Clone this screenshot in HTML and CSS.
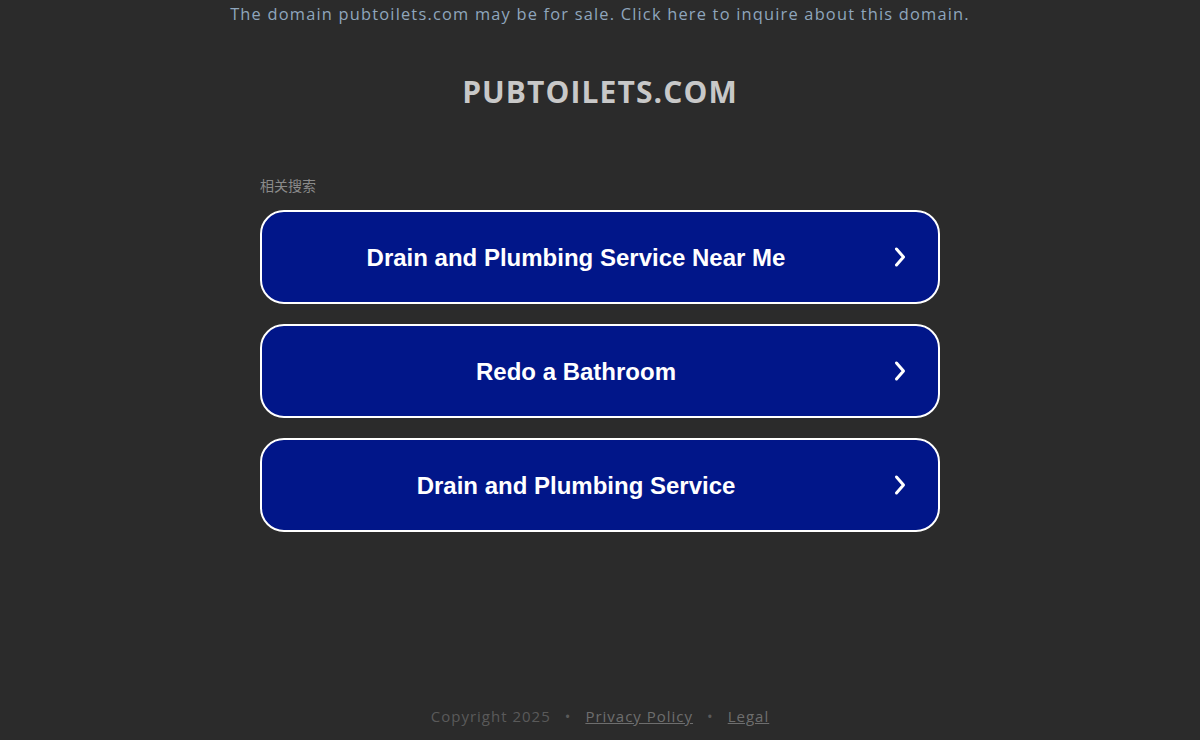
FILE: index.html
```html
<!DOCTYPE html>
<html lang="en">
<head>
<meta charset="utf-8">
<title>pubtoilets.com</title>
<link rel="stylesheet" href="styles.css">
</head>
<body>
<div class="page">
  <div class="sale-bar"><a href="#" class="sale-link">The domain pubtoilets.com may be for sale. Click here to inquire about this domain.</a></div>
  <h1 class="domain">PUBTOILETS.COM</h1>
  <main class="content">
    <div class="related">相关搜索</div>
    <ul class="links">
      <li><a href="#" class="link-btn"><span class="link-text">Drain and Plumbing Service Near Me</span><span class="chev"><svg width="16" height="24" viewBox="0 0 16 24"><path d="M4.5 4 L11.5 12 L4.5 20" fill="none" stroke="#fff" stroke-width="3" stroke-linecap="round" stroke-linejoin="round"/></svg></span></a></li>
      <li><a href="#" class="link-btn"><span class="link-text">Redo a Bathroom</span><span class="chev"><svg width="16" height="24" viewBox="0 0 16 24"><path d="M4.5 4 L11.5 12 L4.5 20" fill="none" stroke="#fff" stroke-width="3" stroke-linecap="round" stroke-linejoin="round"/></svg></span></a></li>
      <li><a href="#" class="link-btn"><span class="link-text">Drain and Plumbing Service</span><span class="chev"><svg width="16" height="24" viewBox="0 0 16 24"><path d="M4.5 4 L11.5 12 L4.5 20" fill="none" stroke="#fff" stroke-width="3" stroke-linecap="round" stroke-linejoin="round"/></svg></span></a></li>
    </ul>
  </main>
  <footer class="footer">
    <span class="copy">Copyright 2025</span>
    <span class="dot">•</span>
    <a href="#" class="foot-link">Privacy Policy</a>
    <span class="dot">•</span>
    <a href="#" class="foot-link">Legal</a>
  </footer>
</div>
</body>
</html>
```
FILE: styles.css
```css
* { box-sizing: border-box; }
html, body { margin: 0; padding: 0; }
body {
  background: #2b2b2b;
  font-family: "Open Sans", "Noto Sans", sans-serif;
  width: 1200px;
  height: 740px;
  overflow: hidden;
}
.page {
  display: flex;
  flex-direction: column;
  align-items: center;
  height: 740px;
}
.sale-bar {
  padding-top: 2px;
  height: 28px;
  text-align: center;
}
.sale-link {
  color: #8fa6bd;
  font-size: 16.4px;
  text-decoration: none;
  letter-spacing: 1.2px;
}
.domain {
  margin: 44px 0 0;
  font-size: 30px;
  font-weight: 700;
  color: #c8c8c8;
  letter-spacing: 1.1px;
  line-height: 40px;
}
.content {
  width: 680px;
  margin-top: 64px;
}
.related {
  font-family: "Noto Sans CJK SC", sans-serif;
  font-size: 14px;
  color: #8a8a8a;
  line-height: 18px;
  margin-bottom: 16px;
}
.links {
  list-style: none;
  margin: 0;
  padding: 0;
  display: flex;
  flex-direction: column;
  gap: 20px;
}
.link-btn {
  display: flex;
  align-items: center;
  height: 94px;
  background: #011689;
  border: 2px solid #ffffff;
  border-radius: 24px;
  text-decoration: none;
  color: #fff;
}
.link-text {
  flex: 1;
  text-align: center;
  font-family: "Liberation Sans", Arial, sans-serif;
  font-weight: 700;
  font-size: 24px;
  padding-top: 2px;
}
.chev {
  flex: 0 0 48px;
  display: flex;
  justify-content: flex-start;
  position: relative;
  left: 2px;
  top: 0;
}
.footer {
  margin-top: auto;
  padding-bottom: 14px;
  display: flex;
  gap: 14px;
  font-size: 15px;
  color: #5a5a5a;
  letter-spacing: 1px;
}
.foot-link { color: #6e6e6e; text-decoration: underline; }
.dot { color: #5a5a5a; }
```
